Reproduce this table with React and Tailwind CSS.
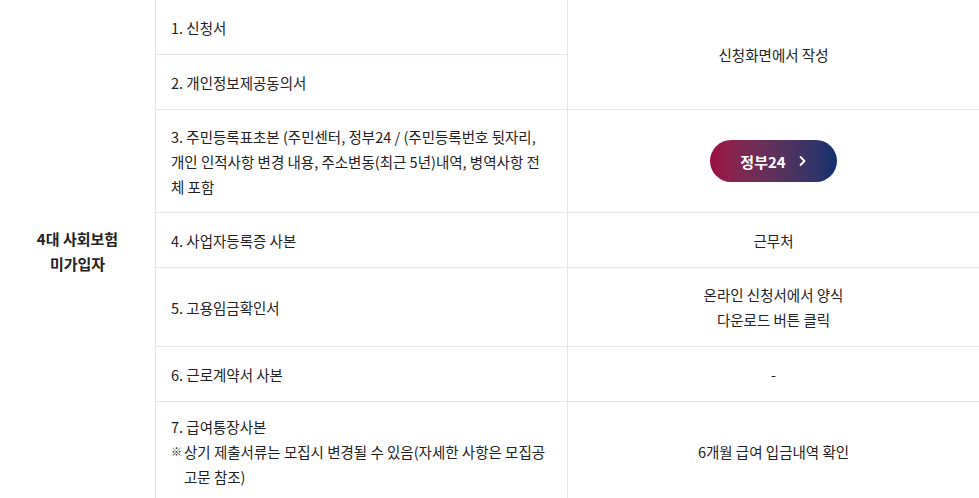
import React from 'react';

const rows = [
  { h: 'h-[55px]', text: ['1. 신청서'] },
  { h: 'h-[55px]', text: ['2. 개인정보제공동의서'] },
  { h: 'h-[103px]', text: ['3. 주민등록표초본 (주민센터, 정부24 / (주민등록번호 뒷자리, 개인 인적사항 변경 내용, 주소변동(최근 5년)내역, 병역사항 전체 포함'] },
  { h: 'h-[55px]', text: ['4. 사업자등록증 사본'] },
  { h: 'h-[79px]', text: ['5. 고용임금확인서'] },
  { h: 'h-[55px]', text: ['6. 근로계약서 사본'] },
  { h: 'h-[100px]', text: ['7. 급여통장사본'], note: '상기 제출서류는 모집시 변경될 수 있음(자세한 사항은 모집공고문 참조)' },
];

const App = () => {
  return (
    <div className="w-[979px] h-[498px] overflow-hidden bg-white text-[#222] text-[14.5px] leading-[25px]" style={{ fontFamily: '"Noto Sans CJK KR", "Noto Sans", sans-serif' }}>
      <div className="grid grid-cols-[156px_412px_1fr]">
        {/* 첫 번째 열: 전체 병합 */}
        <div className="row-span-7 flex items-center justify-center text-center font-bold text-[15px] border-r border-[#e4e4ec]">
          <p>4대 사회보험<br />미가입자</p>
        </div>

        {rows.map((row, i) => (
          <React.Fragment key={i}>
            <div className={`${row.h} flex flex-col justify-center pl-[15px] pr-[16px] border-b border-r border-[#e4e4ec]`}>
              {row.text.map(t => <p key={t}>{t}</p>)}
              {row.note && (
                <p className="flex">
                  <span className="w-[13px] shrink-0 text-[11px]">※</span>
                  <span>{row.note}</span>
                </p>
              )}
            </div>
            {i === 0 && (
              <div className="row-span-2 flex items-center justify-center border-b border-[#e4e4ec]">
                신청화면에서 작성
              </div>
            )}
            {i === 2 && (
              <div className="flex items-center justify-center border-b border-[#e4e4ec]">
                <button type="button" className="flex items-center justify-center gap-[12px] w-[127px] h-[42px] rounded-full bg-gradient-to-r from-[#9c0c44] to-[#0e306e] text-white font-bold text-[15px]">
                  정부24
                  <svg width="9" height="12" viewBox="0 0 9 12" fill="none" stroke="white" strokeWidth="1.8" strokeLinecap="round" strokeLinejoin="round">
                    <path d="M2.5 2l4 4-4 4" />
                  </svg>
                </button>
              </div>
            )}
            {i === 3 && <div className="flex items-center justify-center border-b border-[#e4e4ec]">근무처</div>}
            {i === 4 && (
              <div className="flex items-center justify-center text-center border-b border-[#e4e4ec]">
                <p>온라인 신청서에서 양식<br />다운로드 버튼 클릭</p>
              </div>
            )}
            {i === 5 && <div className="flex items-center justify-center border-b border-[#e4e4ec]">-</div>}
            {i === 6 && <div className="flex items-center justify-center border-b border-[#e4e4ec]">6개월 급여 입금내역 확인</div>}
          </React.Fragment>
        ))}
      </div>
    </div>
  );
};

export default App;
